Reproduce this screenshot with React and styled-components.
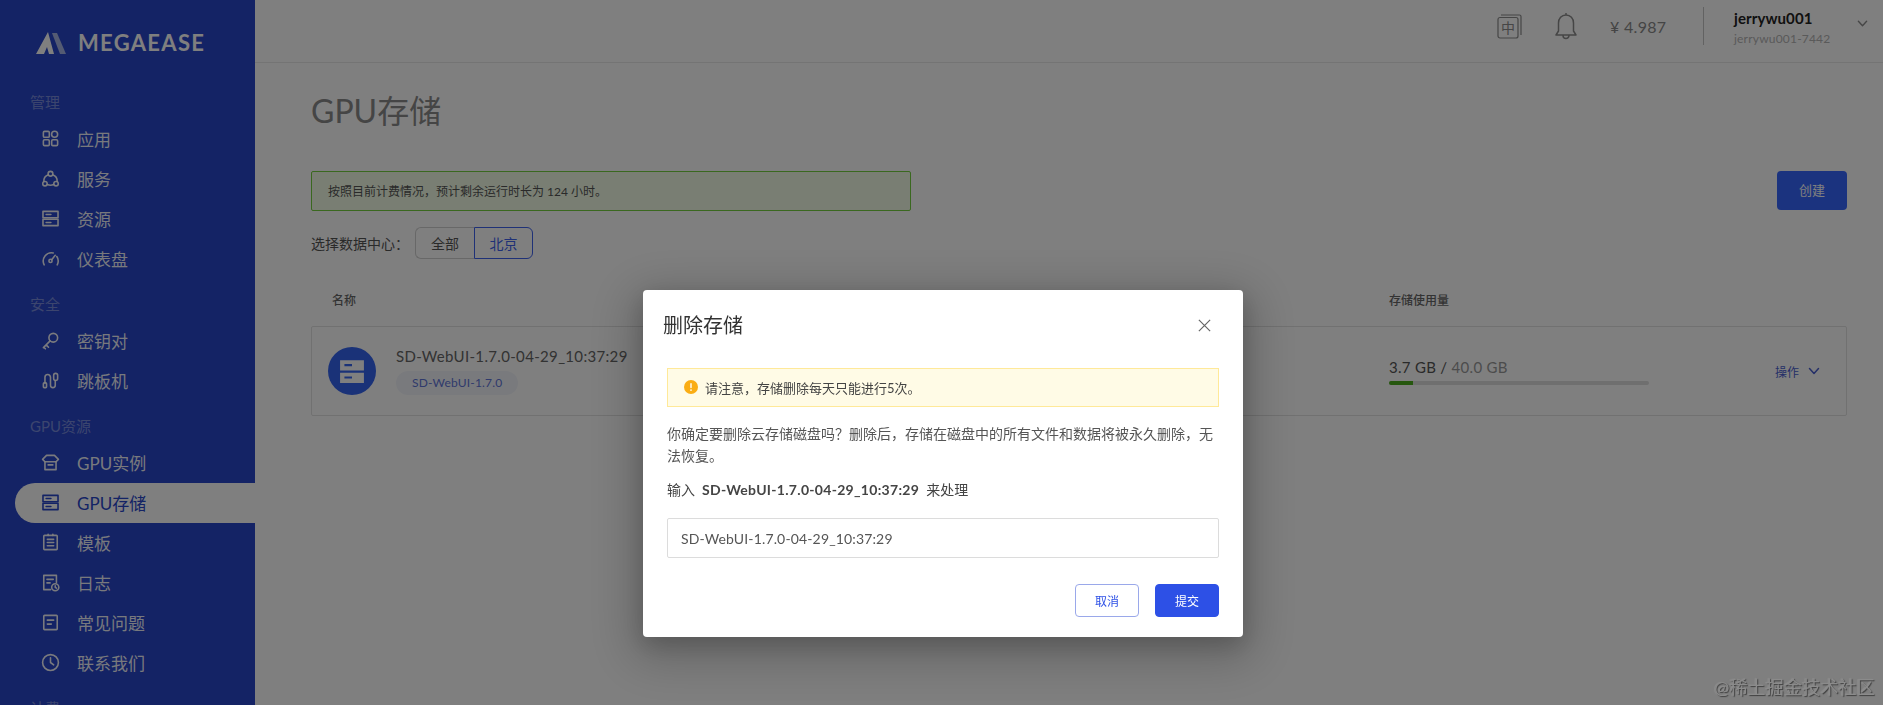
import React from 'react'
import styled, { createGlobalStyle } from 'styled-components'

const GlobalStyle = createGlobalStyle`
    html, body {
        margin: 0;
        padding: 0;
        height: 100%;
        overflow: hidden;
        background: #fff;
        font-family: Lato, "Noto Sans CJK SC", sans-serif;
    }
    * {
        box-sizing: border-box;
    }
`

const Page = styled.div`
    display: flex;
    height: 100vh;
    overflow: hidden;
    background: #fff;
`

const Sidebar = styled.aside`
    flex: 0 0 255px;
    height: 100%;
    overflow: hidden;
    background: #2846ca;
`

const Brand = styled.div`
    display: flex;
    align-items: center;
    gap: 12px;
    height: 77px;
    padding: 8px 0 0 36px;
`

const BrandName = styled.span`
    font-family: Lato, sans-serif;
    font-size: 22px;
    font-weight: 700;
    letter-spacing: 1.3px;
    color: #fff;
`

const SectionLabel = styled.div`
    height: 42px;
    padding: 15px 0 0 30px;
    font-size: 15px;
    line-height: 20px;
    color: rgba(255, 255, 255, 0.38);
`

const MenuItem = styled.div`
    display: flex;
    align-items: center;
    gap: 17px;
    height: 40px;
    margin-left: 15px;
    padding: 0 0 2px 26px;
    border-radius: 20px 0 0 20px;
    font-size: 17px;
    background: ${(p) => (p.$active ? '#fff' : 'transparent')};
    color: ${(p) => (p.$active ? '#2846ca' : 'rgba(255, 255, 255, 0.95)')};

    svg {
        flex: none;
        width: 19px;
        height: 19px;
    }
`

const Main = styled.main`
    flex: 1;
    min-width: 0;
    display: flex;
    flex-direction: column;
`

const Topbar = styled.header`
    flex: none;
    display: flex;
    align-items: center;
    height: 63px;
    padding: 0 0 10px 1242px;
    border-bottom: 1px solid #e8e8e8;
`

const TopIcon = styled.div`
    display: flex;
    width: ${(p) => p.$w}px;
    margin-right: ${(p) => p.$gap}px;
    margin-bottom: ${(p) => p.$lift || 0}px;
    color: #8c8c8c;

    svg {
        width: 100%;
    }
`

const Balance = styled.span`
    width: 93px;
    font-size: 16px;
    letter-spacing: 0.3px;
    color: #8a8a8a;
`

const Divider = styled.div`
    width: 1px;
    height: 38px;
    margin-right: 30px;
    background: #c4c4c4;
`

const Account = styled.div`
    display: flex;
    flex-direction: column;
    gap: 4px;
    width: 123px;
    margin-top: 4px;
`

const AccountName = styled.span`
    font-size: 15px;
    line-height: 18px;
    font-weight: 700;
    letter-spacing: 0.1px;
    color: #222;
`

const AccountId = styled.span`
    font-size: 12px;
    line-height: 16px;
    letter-spacing: 0.2px;
    color: #b4b4b4;
`

const Content = styled.div`
    padding: 28px 36px 0 56px;
`

const Title = styled.h1`
    margin: 0 0 40px;
    font-size: 32px;
    line-height: 40px;
    font-weight: 400;
    color: #8a8a8a;
`

const NoticeRow = styled.div`
    display: flex;
    justify-content: space-between;
    align-items: flex-start;
    margin-bottom: 16px;
`

const Notice = styled.div`
    display: flex;
    align-items: center;
    width: 600px;
    height: 40px;
    padding: 0 0 2px 16px;
    border: 1px solid #74d13e;
    border-radius: 2px;
    background: #f2fde6;
    font-size: 12px;
    color: #555;
`

const CreateButton = styled.button`
    width: 70px;
    height: 39px;
    padding: 0 0 2px;
    border: 0;
    border-radius: 4px;
    background: #3666ff;
    font: inherit;
    font-size: 13px;
    color: #fff;
`

const FilterRow = styled.div`
    display: flex;
    align-items: center;
    height: 32px;
    font-size: 14px;
    color: #555;
`

const FilterLabel = styled.span`
    width: 104px;
`

const Segment = styled.div`
    display: flex;
    align-items: center;
    justify-content: center;
    width: 59px;
    height: 32px;
    font-size: 14px;
    border: 1px solid ${(p) => (p.$active ? '#3f62ee' : '#d0d0d0')};
    border-radius: ${(p) => (p.$active ? '0 6px 6px 0' : '6px 0 0 6px')};
    ${(p) => !p.$active && 'border-right: 0;'}
    color: ${(p) => (p.$active ? '#3f62ee' : '#555')};
`

const TableHead = styled.div`
    display: grid;
    grid-template-columns: 1fr 458px;
    align-items: center;
    height: 67px;
    padding: 13px 0 0 21px;
    font-size: 12px;
    font-weight: 500;
    color: #666;
`

const Card = styled.div`
    display: grid;
    grid-template-columns: 1fr 457px;
    align-items: center;
    height: 90px;
    padding-left: 16px;
    border: 1px solid #e2e2e2;
    border-radius: 2px;
`

const DiskCell = styled.div`
    display: flex;
    align-items: center;
    gap: 20px;
`

const DiskBadge = styled.div`
    display: flex;
    align-items: center;
    justify-content: center;
    width: 48px;
    height: 48px;
    border-radius: 50%;
    background: #3464f0;
    color: #fff;

    svg {
        width: 26px;
        height: 26px;
    }
`

const DiskInfo = styled.div`
    display: flex;
    flex-direction: column;
    align-items: flex-start;
    gap: 6px;
    margin-top: -1px;
`

const DiskName = styled.span`
    font-size: 15px;
    line-height: 18px;
    letter-spacing: 0.33px;
    color: #666;
`

const Tag = styled.span`
    padding: 0 16px;
    height: 24px;
    line-height: 24px;
    border-radius: 12px;
    background: #f3f5fb;
    font-size: 12px;
    letter-spacing: 0.2px;
    color: #5f74d8;
`

const UsageCell = styled.div`
    display: flex;
    align-items: center;
    justify-content: space-between;
    padding-right: 26px;
`

const Usage = styled.div`
    width: 260px;
`

const UsageText = styled.div`
    margin: 1px 0 6px;
    font-size: 15px;
    line-height: 16px;
    letter-spacing: 0.3px;
    color: #555;

    span {
        color: #999;
    }
`

const Track = styled.div`
    height: 4px;
    border-radius: 2px;
    background: #dedede;
    overflow: hidden;
`

const Fill = styled.div`
    height: 100%;
    background: #4cae1c;
`

const ActionLink = styled.div`
    display: flex;
    align-items: center;
    gap: 9px;
    font-size: 12px;
    color: #4a5fd0;

    svg {
        width: 12px;
        height: 12px;
    }
`

const Overlay = styled.div`
    position: fixed;
    inset: 0;
    display: flex;
    justify-content: center;
    align-items: flex-start;
    padding: 290px 0 0 3px;
    background: rgba(0, 0, 0, 0.5);
`

const Modal = styled.div`
    width: 600px;
    height: 347px;
    padding: 0 24px;
    border-radius: 4px;
    background: #fff;
    box-shadow: 0 12px 48px 12px rgba(0, 0, 0, 0.2), 0 8px 24px rgba(0, 0, 0, 0.18);
`

const ModalHeader = styled.div`
    display: flex;
    align-items: center;
    justify-content: space-between;
    height: 70px;
    margin: 0 7px 8px -4px;
`

const ModalTitle = styled.h2`
    margin: 0 0 2px;
    font-size: 20px;
    font-weight: 400;
    color: #333;
`

const CloseIcon = styled.svg`
    width: 15px;
    height: 15px;
    color: #666;
`

const Warning = styled.div`
    display: flex;
    align-items: center;
    gap: 7px;
    height: 39px;
    padding: 0 0 1px 16px;
    border: 1px solid #ffe999;
    background: #fffbe6;
    font-size: 13px;
    color: #444;

    svg {
        width: 14px;
        height: 14px;
    }
`

const Paragraph = styled.p`
    margin: 16px 0 12px;
    font-size: 14px;
    line-height: 22px;
    color: #555;
`

const ConfirmLine = styled.div`
    display: flex;
    gap: 7px;
    font-size: 14px;
    line-height: 22px;
    color: #444;

    strong {
        font-weight: 700;
        letter-spacing: 0.3px;
        color: #444;
    }
`

const NameInput = styled.input`
    display: block;
    width: 100%;
    height: 40px;
    margin-top: 17px;
    padding: 0 13px;
    border: 1px solid #dcdcdc;
    border-radius: 2px;
    outline: 0;
    font: inherit;
    font-size: 14px;
    letter-spacing: 0.15px;
    color: #555;
`

const ModalFooter = styled.div`
    display: flex;
    justify-content: flex-end;
    gap: 16px;
    margin-top: 26px;
`

const FooterButton = styled.button`
    width: 64px;
    height: 33px;
    border-radius: 4px;
    border: 1px solid ${(p) => (p.$primary ? '#2d50e6' : '#9aa8ea')};
    background: ${(p) => (p.$primary ? '#2d50e6' : '#fff')};
    font: inherit;
    font-size: 12px;
    color: ${(p) => (p.$primary ? '#fff' : '#2d50e6')};
`

const Watermark = styled.div`
    position: fixed;
    right: 8px;
    bottom: 6px;
    font-size: 18px;
    letter-spacing: 0.2px;
    color: #8b8b8b;
    text-shadow: 1px 1px 1px rgba(40, 40, 40, 0.75), -1px 0 1px rgba(190, 190, 190, 0.25);
`

const stroke = {
    fill: 'none',
    stroke: 'currentColor',
    strokeWidth: 2,
    strokeLinecap: 'round',
    strokeLinejoin: 'round',
}

const Svg = ({ children }) => (
    <svg viewBox="0 0 24 24" {...stroke}>
        {children}
    </svg>
)

const AppsIcon = () => (
    <Svg>
        <rect x="3" y="3" width="7.5" height="7.5" rx="1.5" />
        <circle cx="17.2" cy="6.7" r="3.8" />
        <rect x="3" y="13.5" width="7.5" height="7.5" rx="1.5" />
        <rect x="13.5" y="13.5" width="7.5" height="7.5" rx="1.5" />
    </Svg>
)

const ServiceIcon = () => (
    <Svg>
        <circle cx="12" cy="6" r="3" />
        <circle cx="5" cy="18.5" r="2.8" />
        <circle cx="19" cy="18.5" r="2.8" />
        <path d="M9.3 7.2A8.5 8.5 0 0 0 3.6 15.8M14.7 7.2a8.5 8.5 0 0 1 5.7 8.6M8 19.6a9.5 9.5 0 0 0 8 0" />
    </Svg>
)

const ServerIcon = () => (
    <Svg>
        <rect x="2.5" y="3" width="19" height="8" />
        <rect x="2.5" y="13" width="19" height="8" />
        <path d="M6.5 7h6M6.5 17h6" />
    </Svg>
)

const GaugeIcon = () => (
    <Svg>
        <path d="M4 20A10.5 10.5 0 0 1 15.5 5M20 9.5A10.5 10.5 0 0 1 20.5 20" />
        <circle cx="12" cy="15" r="2" />
        <path d="M13.5 13.5 18 8" />
    </Svg>
)

const KeyIcon = () => (
    <Svg>
        <circle cx="15.5" cy="8.5" r="5.5" />
        <path d="M11.5 12.5 3 21M6.5 17.5l3 3M3.5 20.5l2 2" />
    </Svg>
)

const JumpIcon = () => (
    <Svg>
        <rect x="3" y="15" width="4" height="6" rx="1" />
        <path d="M5 15V8a3.5 3.5 0 0 1 7 0v10a3 3 0 0 0 6 0v-6" />
        <rect x="16" y="3" width="5" height="9" rx="2.5" />
    </Svg>
)

const StoreIcon = () => (
    <Svg>
        <path d="M7 3h10l5 5-3 3H5L2 8z" />
        <path d="M5 11v10h14V11M9 15h6" />
    </Svg>
)

const TemplateIcon = () => (
    <Svg>
        <rect x="3.5" y="3" width="17" height="18" rx="1" />
        <path d="M8 8h8M8 12h8M8 16h8M9 3V1.5M15 3V1.5" />
    </Svg>
)

const LogIcon = () => (
    <Svg>
        <path d="M12 21H3.5V3h16v9" />
        <path d="M7.5 8h8M7.5 12.5h4" />
        <circle cx="18" cy="18" r="4.5" />
        <path d="M18 16v2l1.5 1" />
    </Svg>
)

const FaqIcon = () => (
    <Svg>
        <rect x="3.5" y="3" width="17" height="18" rx="1" />
        <path d="M8 9h8M8 14h5" />
    </Svg>
)

const ClockIcon = () => (
    <Svg>
        <circle cx="12" cy="12" r="10" />
        <path d="M12 6v6l4 3" />
    </Svg>
)

const Chevron = () => (
    <svg viewBox="0 0 24 24" fill="none" stroke="currentColor" strokeWidth="3" strokeLinecap="round" strokeLinejoin="round">
        <path d="M3 7l9 10 9-10" />
    </svg>
)

const menu = [
    { label: '管理' },
    { text: '应用', Icon: AppsIcon },
    { text: '服务', Icon: ServiceIcon },
    { text: '资源', Icon: ServerIcon },
    { text: '仪表盘', Icon: GaugeIcon },
    { label: '安全' },
    { text: '密钥对', Icon: KeyIcon },
    { text: '跳板机', Icon: JumpIcon },
    { label: 'GPU资源' },
    { text: 'GPU实例', Icon: StoreIcon },
    { text: 'GPU存储', Icon: ServerIcon, active: true },
    { text: '模板', Icon: TemplateIcon },
    { text: '日志', Icon: LogIcon },
    { text: '常见问题', Icon: FaqIcon },
    { text: '联系我们', Icon: ClockIcon },
    { label: '计费' },
]

const DISK_NAME = 'SD-WebUI-1.7.0-04-29_10:37:29'

function App() {
    return (
        <React.Fragment>
            <GlobalStyle />
            <Page>
                <Sidebar>
                    <Brand>
                        <svg width="30" height="22" viewBox="0 0 30 22">
                            <path d="M0 22 12 0l6 22h-5l-2-7-3 7z" fill="#fff" />
                            <path d="M16 1h5l9 21h-6z" fill="#a9b6e6" />
                        </svg>
                        <BrandName>MEGAEASE</BrandName>
                    </Brand>
                    {menu.map((entry) =>
                        entry.label ? (
                            <SectionLabel key={entry.label}>{entry.label}</SectionLabel>
                        ) : (
                            <MenuItem key={entry.text} $active={entry.active}>
                                <entry.Icon />
                                {entry.text}
                            </MenuItem>
                        )
                    )}
                </Sidebar>
                <Main>
                    <Topbar>
                        <TopIcon $w={25} $gap={33}>
                            <svg viewBox="0 0 25 25" fill="none" stroke="currentColor" strokeWidth="1.2">
                                <rect x="1" y="3.5" width="20" height="20.5" rx="2" />
                                <path d="M4 1h18.5a1.5 1.5 0 0 1 1.5 1.5V21" />
                                <text x="11" y="19" textAnchor="middle" fontSize="14" fill="currentColor" stroke="none">中</text>
                            </svg>
                        </TopIcon>
                        <TopIcon $w={22} $gap={33}>
                            <svg viewBox="0 0 22 28" fill="none" stroke="currentColor" strokeWidth="1.5" strokeLinejoin="round">
                                <path d="M11 3c-4.5 0-7.5 3.5-7.5 8v8L1 23h20l-2.5-4v-8c0-4.5-3-8-7.5-8zM11 1v2M8 23.5a3 3 0 0 0 6 0" />
                            </svg>
                        </TopIcon>
                        <Balance>¥ 4.987</Balance>
                        <Divider />
                        <Account>
                            <AccountName>jerrywu001</AccountName>
                            <AccountId>jerrywu001-7442</AccountId>
                        </Account>
                        <TopIcon $w={11} $gap={0} $lift={6}>
                            <Chevron />
                        </TopIcon>
                    </Topbar>
                    <Content>
                        <Title>GPU存储</Title>
                        <NoticeRow>
                            <Notice>按照目前计费情况，预计剩余运行时长为 124 小时。</Notice>
                            <CreateButton>创建</CreateButton>
                        </NoticeRow>
                        <FilterRow>
                            <FilterLabel>选择数据中心：</FilterLabel>
                            <Segment>全部</Segment>
                            <Segment $active>北京</Segment>
                        </FilterRow>
                        <TableHead>
                            <span>名称</span>
                            <span>存储使用量</span>
                        </TableHead>
                        <Card>
                            <DiskCell>
                                <DiskBadge>
                                    <svg viewBox="0 0 24 24">
                                        <path
                                            fill="currentColor"
                                            fillRule="evenodd"
                                            d="M1 2h22v9.5H1zM1 13.5h22V23H1zM5 5.5v2h7v-2zM5 17v2h7v-2z"
                                        />
                                    </svg>
                                </DiskBadge>
                                <DiskInfo>
                                    <DiskName>{DISK_NAME}</DiskName>
                                    <Tag>SD-WebUI-1.7.0</Tag>
                                </DiskInfo>
                            </DiskCell>
                            <UsageCell>
                                <Usage>
                                    <UsageText>
                                        3.7 GB / <span>40.0 GB</span>
                                    </UsageText>
                                    <Track>
                                        <Fill style={{ width: `${(3.7 / 40) * 100}%` }} />
                                    </Track>
                                </Usage>
                                <ActionLink>
                                    操作
                                    <Chevron />
                                </ActionLink>
                            </UsageCell>
                        </Card>
                    </Content>
                </Main>
            </Page>
            <Overlay>
                <Modal>
                    <ModalHeader>
                        <ModalTitle>删除存储</ModalTitle>
                        <CloseIcon viewBox="0 0 16 16" fill="none" stroke="currentColor" strokeWidth="1.3">
                            <path d="M2 2l12 12M14 2 2 14" />
                        </CloseIcon>
                    </ModalHeader>
                    <Warning>
                        <svg viewBox="0 0 16 16">
                            <circle cx="8" cy="8" r="8" fill="#faad14" />
                            <rect x="7.2" y="3.5" width="1.6" height="6" rx="0.8" fill="#fff" />
                            <circle cx="8" cy="11.5" r="1" fill="#fff" />
                        </svg>
                        请注意，存储删除每天只能进行5次。
                    </Warning>
                    <Paragraph>你确定要删除云存储磁盘吗？删除后，存储在磁盘中的所有文件和数据将被永久删除，无法恢复。</Paragraph>
                    <ConfirmLine>
                        输入 <strong>{DISK_NAME}</strong> 来处理
                    </ConfirmLine>
                    <NameInput readOnly value={DISK_NAME} />
                    <ModalFooter>
                        <FooterButton>取消</FooterButton>
                        <FooterButton $primary>提交</FooterButton>
                    </ModalFooter>
                </Modal>
            </Overlay>
            <Watermark>@稀土掘金技术社区</Watermark>
        </React.Fragment>
    )
}

export default App
